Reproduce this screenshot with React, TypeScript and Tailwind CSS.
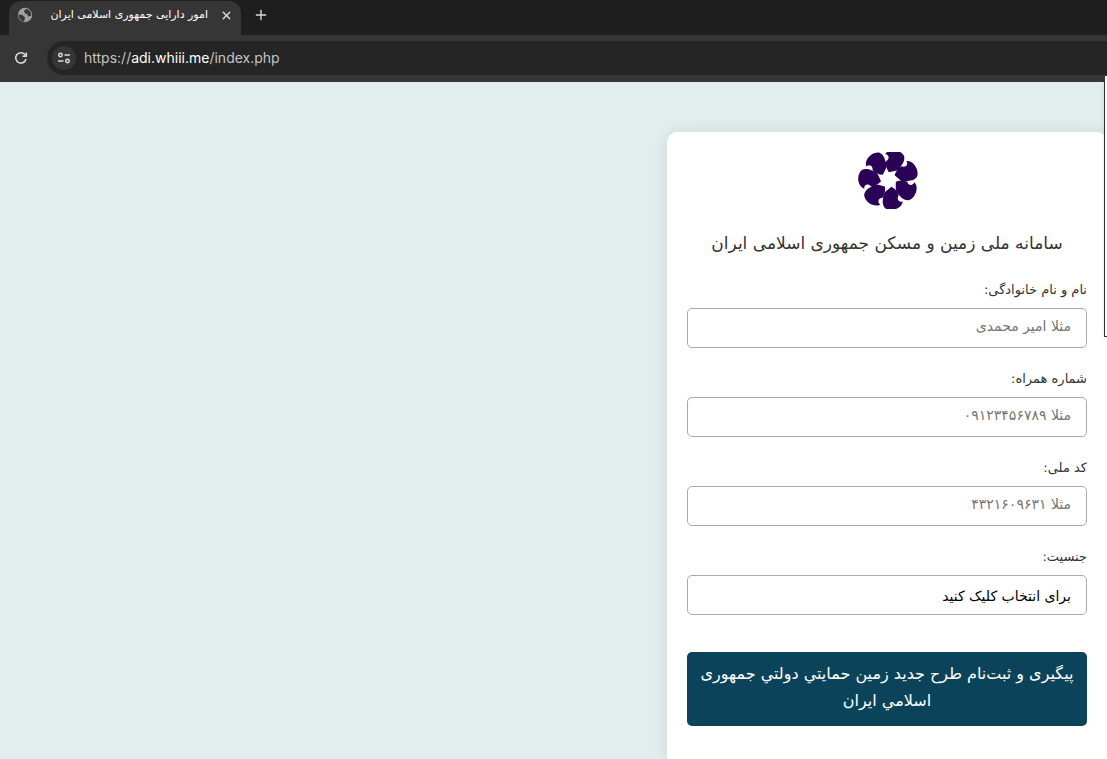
import { Plus, X } from "lucide-react"

const fields = [
    { id: "name", label: "نام و نام خانوادگی:", placeholder: "مثلا امیر محمدی" },
    { id: "mobile", label: "شماره همراه:", placeholder: "مثلا ۰۹۱۲۳۴۵۶۷۸۹" },
    { id: "code", label: "کد ملی:", placeholder: "مثلا ۴۳۲۱۶۰۹۶۳۱" },
]

const petals = [0, 1, 2, 3, 4, 5, 6]

const Logo = () => (
    <svg viewBox="0 0 62 57" className="w-[62px] h-[57px]" fill="#2b0057" aria-hidden="true">
        {petals.map(p => (
            <path
                key={p}
                transform={`translate(32.5 27.8) rotate(${(p * 360) / 7 - 11})`}
                d="M1.600 7.400 L-5.500 11 Q-8.300 13 -8.800 17 C-10.500 21 -10.500 24 -9 27 C-6 30.500 0 31 4 29.500 C7 28.500 9 26.500 9.800 24 C5.500 24.500 4 20 7 17.500 C6.500 13 4.500 10 1.600 7.400Z"
            />
        ))}
    </svg>
)

const BrowserBar = () => (
    <header className="bg-[#1e1e1e] font-['Inter',sans-serif] text-[#dcdcdc]">
        <div className="flex items-center h-[35px] pl-[9px]">
            <div className="flex items-center self-stretch mt-px w-[232px] px-2 pb-1.5 rounded-t-xl bg-[#363636]">
                <svg viewBox="0 0 16 16" className="size-4 shrink-0" aria-hidden="true">
                    <circle cx="8" cy="8" r="7.2" fill="#9aa0a6" />
                    <path d="M1.5 7.5 L5.5 8 L8 10.5 L7.2 14.4 C4 14 1.5 11.500 1.500 7.500Z M9 2 L7 4 L8 6.500 L10.500 7 L11 9.500 L14.200 8.800 C14.500 5 12 2.500 9 2Z" fill="#363636" />
                </svg>
                <span dir="rtl" className="flex-1 pr-3 text-[11px] whitespace-nowrap text-white font-['DejaVu_Sans',sans-serif]">امور دارایی جمهوری اسلامی ایران</span>
                <button type="button" aria-label="Close tab"><X size={13} strokeWidth={2.5} /></button>
            </div>
            <button type="button" aria-label="New tab" className="ml-3 pb-1.5"><Plus size={16} /></button>
        </div>
        <div className="flex items-center h-[47px] pl-[13px] pb-px bg-[#363636]">
            <button type="button" aria-label="Reload" className="mr-[18px]">
                <svg viewBox="0 0 16 16" className="size-4" fill="none" stroke="currentColor" strokeWidth="1.500" aria-hidden="true">
                    <path d="M13 9 A5.200 5.200 0 1 1 11.800 4.400 L13 5.800 M13.300 2.500 V6.200 H9.500" />
                </svg>
            </button>
            <div className="flex flex-1 items-center h-[34px] pl-[5px] rounded-l-full bg-[#252525]">
                <button type="button" aria-label="Site information" className="grid place-items-center size-6 rounded-full bg-[#363636]">
                    <svg viewBox="0 0 14 14" className="size-[14px]" fill="none" stroke="currentColor" strokeWidth="1.500" aria-hidden="true">
                        <circle cx="3.500" cy="4" r="1.700" />
                        <path d="M7.500 4 H13 M1 10 H6.500" />
                        <circle cx="10.500" cy="10" r="1.700" />
                    </svg>
                </button>
                <p className="ml-2 text-sm text-[#c4c4c4]">https://<span className="text-white">adi.whiii.me</span>/index.php</p>
            </div>
        </div>
    </header>
)

const App = () => {
    return (
        <div className="relative flex flex-col h-screen overflow-hidden bg-[#e2eeee]">
            <BrowserBar />
            <main dir="rtl" className="flex-1 min-h-0 pt-[50px] font-['DejaVu_Sans',sans-serif] text-[#333]">
                <form className="w-[440px] h-full px-5 pt-5 rounded-t-[10px] bg-white shadow-[0_0_15px_rgba(0,0,0,0.1)]">
                    <div className="flex justify-center">
                        <Logo />
                    </div>
                    <h1 className="mt-5 mb-[22px] text-center text-[17px] leading-7 font-medium whitespace-nowrap">سامانه ملی زمین و مسکن جمهوری اسلامی ایران</h1>
                    {fields.map(f => (
                        <div key={f.id} className="mb-5">
                            <label htmlFor={f.id} className="block h-[29px] text-[13px] leading-[22px]">{f.label}</label>
                            <input id={f.id} placeholder={f.placeholder} className="block w-full h-10 px-[15px] pb-1 rounded-[5px] border border-[#aaa] text-sm placeholder:text-[#757575]" />
                        </div>
                    ))}
                    <label htmlFor="gender" className="block h-[29px] text-[13px] leading-[22px]">جنسیت:</label>
                    <select id="gender" className="block appearance-none w-full h-10 px-[15px] pt-0.5 rounded-[5px] border border-[#aaa] bg-white text-sm text-black">
                        <option>برای انتخاب کلیک کنید</option>
                    </select>
                    <button type="button" className="block w-full mt-[37px] px-1 pt-2 pb-3 rounded-[5px] bg-[#0b445a] text-white text-base leading-[27px] font-medium">
                        پیگیری و ثبت‌نام طرح جدید زمین حمایتي دولتي جمهوری اسلامي ایران
                    </button>
                </form>
            </main>
            {/* edge of the window lying over the page */}
            <div className="absolute top-[75px] -right-1 w-[7px] h-[262px] border border-[#333] bg-white shadow-md" />
        </div>
    )
}

export default App
